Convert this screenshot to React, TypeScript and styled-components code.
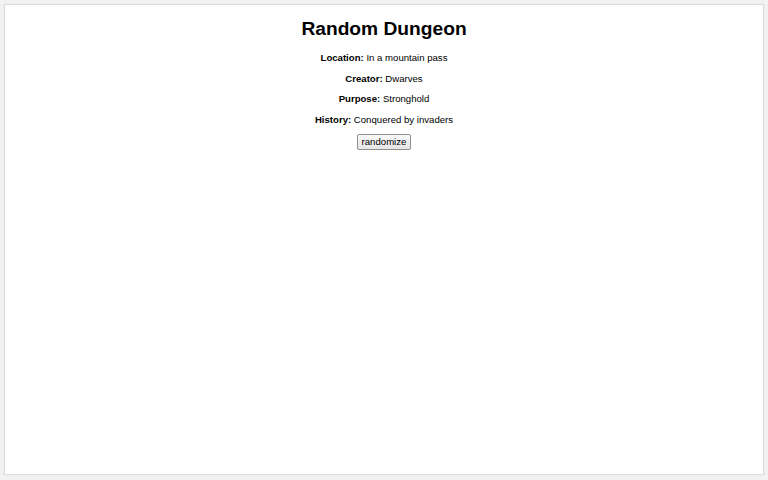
import React from "react";
import styled, { createGlobalStyle } from "styled-components";

const GlobalStyle = createGlobalStyle`
  html, body {
    margin: 0;
    padding: 0;
    background: #f2f2f2;
    font-family: "Liberation Sans", Arial, sans-serif;
  }
`;

const Page = styled.div`
  padding: 4px 4px 5px 4px;
  box-sizing: border-box;
  height: 480px;
`;

const Panel = styled.main`
  box-sizing: border-box;
  height: 100%;
  background: #ffffff;
  border: 1px solid #dcdcdc;
  box-shadow: 0 0 2px rgba(0, 0, 0, 0.06);
  display: flex;
  flex-direction: column;
  align-items: center;
  padding-top: 12px;
`;

const Title = styled.h1`
  margin: 0 0 12px 0;
  font-size: 19.2px;
  line-height: 23px;
  font-weight: bold;
  color: #000;
`;

const Line = styled.p`
  margin: 0 0 9px 0;
  font-size: 9.6px;
  line-height: 11.5px;
  color: #000;
`;

const Label = styled.b`
  font-weight: bold;
`;

const Button = styled.button`
  margin-top: 0;
  font-family: "Liberation Sans", Arial, sans-serif;
  font-size: 9.6px;
  line-height: 11.5px;
  padding: 1px 4px;
  color: #000;
  background: linear-gradient(#f8f8f8, #e6e6e6);
  border: 1px solid #8f8f8f;
  border-radius: 2px;
  cursor: pointer;
`;

const facts: [string, string][] = [
  ["Location", "In a mountain pass"],
  ["Creator", "Dwarves"],
  ["Purpose", "Stronghold"],
  ["History", "Conquered by invaders"],
];

export default function App() {
  return (
    <>
      <GlobalStyle />
      <Page>
        <Panel>
          <Title>Random Dungeon</Title>
          {facts.map(([k, v]) => (
            <Line key={k}>
              <Label>{k}:</Label> {v}
            </Line>
          ))}
          <Button>randomize</Button>
        </Panel>
      </Page>
    </>
  );
}
